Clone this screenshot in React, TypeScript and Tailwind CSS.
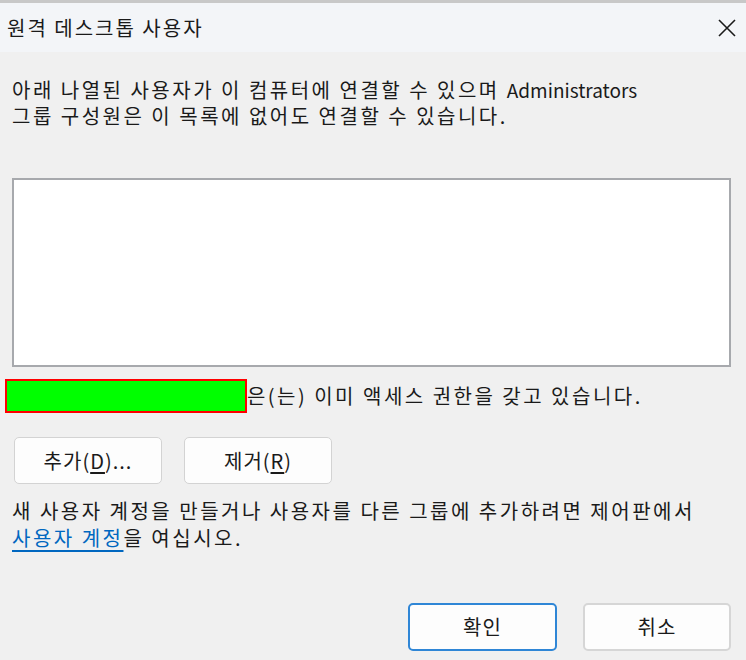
import React from "react";

export default function App() {
  const font = { fontFamily: '"Noto Sans CJK KR", "Noto Sans", sans-serif' };
  return (
    <div
      className="w-[746px] h-[660px] bg-[#f0f0f0] flex flex-col text-[#1a1a1a] overflow-hidden"
      style={font}
    >
      {/* title bar */}
      <div className="h-[52px] shrink-0 border-t-[3px] border-[#c8c8c8] bg-[#f3f5f8] flex items-center justify-between pl-[7px] pr-[9px]">
        <span className="text-[20px] leading-none tracking-[2px]">원격 데스크톱 사용자</span>
        <svg width="20" height="20" viewBox="0 0 20 20">
          <path d="M2 2 L18 18 M18 2 L2 18" stroke="#1a1a1a" strokeWidth="1.6" />
        </svg>
      </div>

      <div className="flex flex-col px-[12px] pr-[15px]">
        <p className="mt-[25px] text-[20px] leading-[26px] tracking-[2.5px] whitespace-nowrap">
          아래 나열된 사용자가 이 컴퓨터에 연결할 수 있으며{" "}
          <span className="text-[19px] tracking-normal">Administrators</span>
          <br />
          그룹 구성원은 이 목록에 없어도 연결할 수 있습니다.
        </p>

        <div className="mt-[49px] h-[189px] bg-white border-2 border-[#a7a9ad]" />

        <div className="relative mt-[12px] h-[34px] flex items-center">
          <span className="ml-[214px] text-[20px] leading-none tracking-[2.5px] whitespace-nowrap">
            님은(는) 이미 액세스 권한을 갖고 있습니다.
          </span>
          <div className="absolute left-[-7px] top-0 w-[242px] h-[34px] bg-[#00ff00] border-2 border-[#ff0000]" />
        </div>

        <div className="mt-[24px] flex gap-[22px] pl-[2px]">
          <button className="w-[148px] h-[47px] rounded-[5px] bg-[#fdfdfd] border border-[#d3d3d3] text-[20px] tracking-[1px]">
            추가(<span className="underline underline-offset-[3px]">D</span>)...
          </button>
          <button className="w-[148px] h-[47px] rounded-[5px] bg-[#fdfdfd] border border-[#d3d3d3] text-[20px] tracking-[1px]">
            제거(<span className="underline underline-offset-[3px]">R</span>)
          </button>
        </div>

        <p className="mt-[13px] text-[20px] leading-[27px] tracking-[2.5px] whitespace-nowrap">
          새 사용자 계정을 만들거나 사용자를 다른 그룹에 추가하려면 제어판에서
          <br />
          <span className="text-[#0067c0] underline underline-offset-[4px]">사용자 계정</span>을 여십시오.
        </p>

        <div className="mt-[52px] flex justify-end gap-[26px]">
          <button className="w-[149px] h-[48px] rounded-[5px] bg-[#fdfdfd] border-2 border-[#2f86d6] text-[20px] tracking-[1px]">
            확인
          </button>
          <button className="w-[148px] h-[48px] rounded-[5px] bg-[#fdfdfd] border-2 border-[#d6d6d6] text-[20px] tracking-[1px]">
            취소
          </button>
        </div>
      </div>
    </div>
  );
}
